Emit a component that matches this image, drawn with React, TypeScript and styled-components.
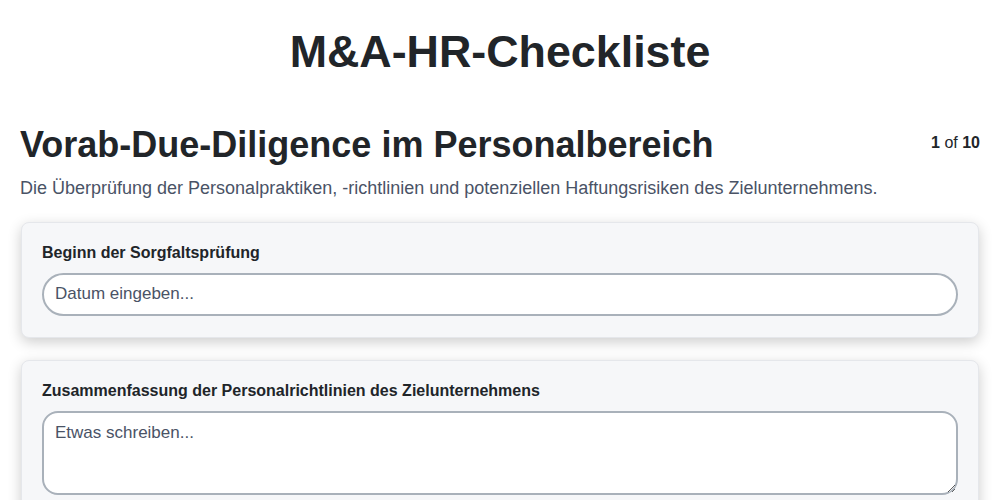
import React from 'react'
import styled, { createGlobalStyle } from 'styled-components'

const GlobalStyle = createGlobalStyle`
    html, body {
        margin: 0;
        padding: 0;
        background: #ffffff;
        font-family: 'Liberation Sans', Arial, sans-serif;
        color: #212529;
    }
    * {
        box-sizing: border-box;
    }
`

interface Field {
    label: string
    placeholder: string
    multiline?: boolean
}

const fields: Field[] = [
    { label: 'Beginn der Sorgfaltsprüfung', placeholder: 'Datum eingeben...' },
    { label: 'Zusammenfassung der Personalrichtlinien des Zielunternehmens', placeholder: 'Etwas schreiben...', multiline: true },
]

const App: React.FC = () => {
    return (
        <Page>
            <GlobalStyle />
            <Title>M&amp;A-HR-Checkliste</Title>
            <SectionHeader>
                <SectionTitle>Vorab-Due-Diligence im Personalbereich</SectionTitle>
                <Pager><b>1</b> of <b>10</b></Pager>
            </SectionHeader>
            <Description>
                Die Überprüfung der Personalpraktiken, -richtlinien und potenziellen Haftungsrisiken des Zielunternehmens.
            </Description>
            <FieldList>
                {fields.map((f) => (
                    <Card key={f.label}>
                        <Label>{f.label}</Label>
                        {f.multiline
                            ? <TextArea placeholder={f.placeholder} />
                            : <Input type="text" placeholder={f.placeholder} />}
                    </Card>
                ))}
            </FieldList>
        </Page>
    )
}

const Page = styled.div`
    padding: 0 20px 40px;
`

const Title = styled.h1`
    margin: 26px 0 0;
    text-align: center;
    font-size: 44.8px;
    line-height: 1.15;
    font-weight: 700;
    color: #212529;
`

const SectionHeader = styled.div`
    display: flex;
    justify-content: space-between;
    align-items: center;
    margin-top: 46px;
`

const SectionTitle = styled.h2`
    margin: 0;
    font-size: 36px;
    line-height: 1.15;
    font-weight: 700;
    color: #212529;
`

const Pager = styled.div`
    font-size: 16px;
    color: #212529;
    margin-top: -2px;

    b {
        font-weight: 700;
    }
`

const Description = styled.p`
    margin: 13px 0 0;
    font-size: 18px;
    line-height: 1.2;
    color: #4a5366;
`

const FieldList = styled.div`
    display: flex;
    flex-direction: column;
    gap: 22px;
    margin-top: 22px;
`

const Card = styled.div`
    background: #f6f7f9;
    border: 1px solid #e5e7eb;
    border-radius: 8px;
    padding: 21px 20px 21px;
    margin: 0 1px;
    box-shadow: 0 4px 14px rgba(0, 0, 0, 0.2);
`

const Label = styled.div`
    font-size: 16px;
    font-weight: 700;
    color: #212529;
    margin-bottom: 11px;
`

const fieldBase = `
    width: 100%;
    display: block;
    border: 2px solid #a9b1ba;
    background: #ffffff;
    font-family: 'Liberation Sans', Arial, sans-serif;
    font-size: 17px;
    color: #212529;
    outline: none;

    &::placeholder {
        color: #4a5366;
        opacity: 1;
    }
`

const Input = styled.input`
    ${fieldBase}
    height: 43px;
    border-radius: 22px;
    padding: 0 11px;
`

const TextArea = styled.textarea`
    ${fieldBase}
    height: 84px;
    border-radius: 16px;
    padding: 10px 11px;
    resize: vertical;
`

export default App
